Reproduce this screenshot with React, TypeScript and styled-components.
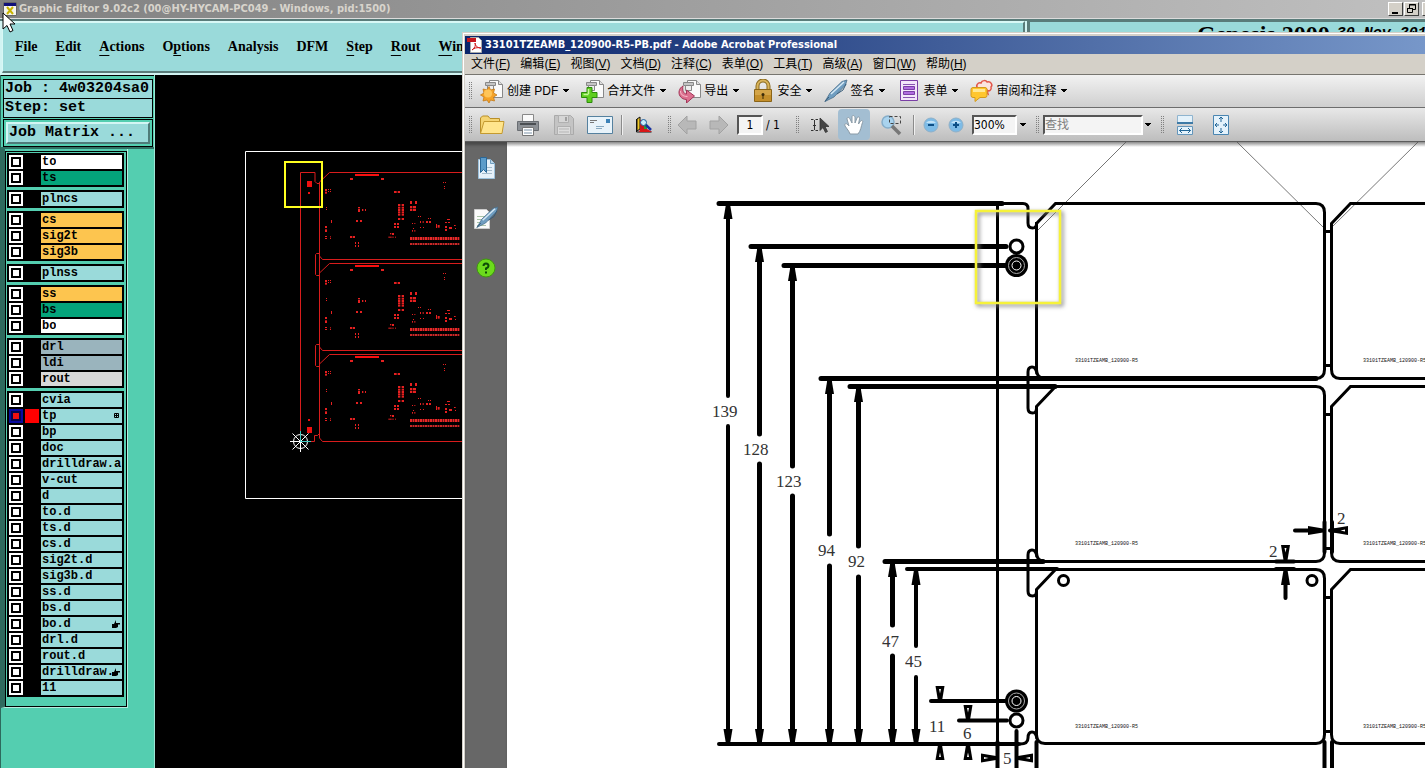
import React from "react";
import styled, { createGlobalStyle } from "styled-components";

const Global = createGlobalStyle`
  *, *::before { box-sizing: border-box; }
  html, body, #root { height: 100%; }
  body { margin: 0; overflow: hidden; background: #000; }
  button, input, select { font: inherit; color: inherit; margin: 0; padding: 0; border: 0; background: none; border-radius: 0; }
  svg { display: block; }
`;

const mono = `"Liberation Mono", monospace`;
const serif = `"Liberation Serif", serif`;
const ui = `"DejaVu Sans Condensed", "Noto Sans CJK SC", sans-serif`;
const cjk = `"Liberation Sans", "Noto Sans CJK SC", sans-serif`;

/* ---------- Graphic Editor window ---------- */

const Desktop = styled.div`
  position: relative;
  display: flex;
  flex-direction: column;
  height: 100vh;
  min-height: 400px;
  overflow: hidden;
`;

const EditorTitle = styled.header`
  display: flex;
  align-items: center;
  flex: none;
  height: 19px;
  padding: 0 0 0 3px;
  gap: 2px;
  border-bottom: 1px solid #dcdcdc;
  background: linear-gradient(90deg, #808080, #c0c0c0);
  color: #d8d4cc;
  font: bold 11px/18px ${ui};
  overflow: hidden;
`;

const TitleText = styled.span`
  flex: 1;
  white-space: nowrap;
`;

const WinButtons = styled.div`
  display: flex;
  gap: 1px;
  margin-right: -12px;
`;

const WinButton = styled.button<{ $apart?: boolean }>`
  width: 15px;
  height: 14px;
  margin-left: ${(p) => (p.$apart ? 2 : 0)}px;
  flex: none;
  background: #d4d0c8;
  border: 1px solid;
  border-color: #fff #404040 #404040 #fff;
`;

const MenuBar = styled.div`
  display: flex;
  flex: none;
  height: 56px;
  gap: 2px;
  padding-left: 2px;
  background: #d2f4f3;
  border-top: 2px solid #5a7c7a;
  border-bottom: 2px solid #d2f4f3;
`;

const MenuPanel = styled.nav`
  display: flex;
  flex: 1;
  gap: 18px;
  padding: 14px 0 0 12px;
  background: #9adada;
  border: solid;
  border-width: 2px 2px 2px 1px;
  border-color: #d8f8f6 #5a7c7a #5a7c7a #d8f8f6;
  font: bold 14px/20px ${serif};
  overflow: hidden;
`;

const MenuItem = styled.button`
  white-space: nowrap;
  height: 20px;
  u { text-underline-offset: 4px; }
`;

const BrandPanel = styled.div`
  display: flex;
  flex: 0 0 398px;
  gap: 7px;
  padding-left: 167px;
  background: #9adada;
  border: solid #5a7c7a;
  border-width: 1px 0 0 3px;
  white-space: nowrap;
  overflow: hidden;
`;

const Brand = styled.span`
  font: bold 24px/24px ${serif};
`;

const BrandDate = styled.span`
  font: italic bold 15px/24px ${mono};
`;

const Body = styled.div`
  display: flex;
  flex: 1;
  min-height: 0;
`;

const Sidebar = styled.aside`
  display: flex;
  flex-direction: column;
  flex: 0 0 155px;
  background: #54ceb0;
  border-left: 1px solid #2d6a5d;
  border-right: 1px solid #9ae6d4;
`;

const JobArea = styled.div`
  display: flex;
  flex-direction: column;
  padding: 3px 1px 0 2px;
  border-top: 1px solid #000;
  border-bottom: 2px solid #2f7263;
  font: bold 15px/18px ${mono};
`;

const JobLine = styled.div`
  height: 20px;
  padding-left: 1px;
  margin-bottom: -1px;
  border: 1px solid #000;
  background: #9adada;
  white-space: nowrap;
  overflow: hidden;
`;

const MatrixFrame = styled.div`
  margin-top: 2px;
  height: 28px;
  padding: 2px;
  border: 1px solid #000;
`;

const MatrixButton = styled.button`
  width: 100%;
  height: 22px;
  padding: 0 0 0 1px;
  text-align: left;
  line-height: 18px;
  background: #9adada;
  border: 2px solid;
  border-color: #d4f6f4 #4f7b79 #4f7b79 #d4f6f4;
`;

const LayerWell = styled.div`
  width: 127px;
  padding-top: 2px;
  border: solid;
  border-width: 0 1px 1px 4px;
  border-color: #2f6a5e #b6eddf #b6eddf #2f6a5e;
`;

const LayerBox = styled.div`
  display: flex;
  flex-direction: column;
  gap: 3px;
  padding: 1px 2px 9px 1px;
  border: 1px solid #000;
`;

const LayerGroup = styled.div`
  padding: 0 2px 2px;
  background: #000;
`;

const LayerRow = styled.div`
  display: grid;
  grid-template-columns: 14px 18px 1fr;
  padding-top: 2px;
  height: 16px;
`;

const LayerCheck = styled.input`
  appearance: none;
  width: 14px;
  height: 14px;
  padding: 2px;
  background: #fff;
  &::before {
    content: "";
    display: block;
    width: 10px;
    height: 10px;
    border: 2px solid #000;
  }
  &:checked { background: #0a0aa0; }
  &:checked::before { background: #f01010; border-color: #05054c; }
`;

const Swatch = styled.span<{ $on?: boolean }>`
  margin: 0 2px;
  background: ${(p) => (p.$on ? "#ff0000" : "#000")};
`;

const LayerName = styled.label<{ $fill: string }>`
  display: flex;
  align-items: center;
  justify-content: space-between;
  padding-left: 1px;
  background: ${(p) => p.$fill};
  font: bold 12px/14px ${mono};
  white-space: nowrap;
  overflow: hidden;
  span { overflow: hidden; height: 14px; }
  svg { flex: none; margin-right: 2px; }
`;

const EditorCanvas = styled.div`
  flex: 1;
  background: #000;
  overflow: hidden;
`;

const Drawing = styled.svg`
  width: 100%;
  height: 100%;
`;

const Pointer = styled.svg`
  position: absolute;
  left: 2px;
  top: 12px;
`;

/* ---------- Acrobat window ---------- */

const Acrobat = styled.section`
  position: absolute;
  left: 462px;
  right: 0;
  top: 32px;
  bottom: 0;
  display: flex;
  flex-direction: column;
  padding: 3px 0 0 2px;
  border: solid #d4d0c8;
  border-width: 1px 0 0 1px;
  background: #d4d0c8;
  box-shadow: inset 1px 1px 0 #fff;
  font: 12px/16px ${cjk};
`;

const AcroTitle = styled.header`
  display: flex;
  align-items: center;
  flex: none;
  height: 18px;
  gap: 2px;
  padding-left: 2px;
  color: #fff;
  background: linear-gradient(90deg, #0a246a, #7797c9);
  font: bold 11px/18px ${ui};
  white-space: nowrap;
  overflow: hidden;
`;

const AcroMenu = styled.nav`
  display: flex;
  flex: none;
  align-items: center;
  height: 21px;
  gap: 10px;
  padding-left: 6px;
  border-bottom: 1px solid #77756f;
`;

const AcroMenuItem = styled.button`
  white-space: nowrap;
  line-height: 18px;
`;

const TaskBar = styled.div`
  display: flex;
  flex: none;
  align-items: center;
  height: 33px;
  gap: 12px;
  padding-left: 3px;
  border-bottom: 1px solid #6d6d6d;
  background: linear-gradient(#f2f2f2, #cfcfcf);
`;

const TaskButton = styled.button`
  display: flex;
  align-items: center;
  height: 28px;
  white-space: nowrap;
  span { margin: 0 5px 0 2px; }
  &:first-of-type { margin-left: -4px; }
  &:first-of-type span { margin-left: 3px; }
`;

const ToolBar = styled.div`
  display: flex;
  flex: none;
  align-items: center;
  height: 34px;
  padding-left: 3px;
  border-bottom: 1px solid #5d5d5d;
  background: linear-gradient(#e8e8e8, #bdbdbd);
  font-family: ${ui};
`;

const Tool = styled.button<{ $w?: number; $active?: boolean }>`
  display: flex;
  align-items: center;
  justify-content: center;
  flex: none;
  width: ${(p) => p.$w ?? 36}px;
  height: 31px;
  border-radius: 4px;
  background: ${(p) => (p.$active ? "#a3bed2" : "none")};
`;

const Grip = styled.span`
  flex: none;
  width: 4px;
  height: 18px;
  background: conic-gradient(#808080 25%, transparent 0) 0 0 / 2px 2px;
`;

const Divider = styled.span`
  flex: none;
  width: 2px;
  height: 20px;
  margin: 0 3px;
  background: #8b8b8b;
  border-right: 1px solid #f0f0f0;
`;

const Gap = styled.span<{ $w: number }>`
  flex: none;
  width: ${(p) => p.$w}px;
`;

const sunken = `
  height: 20px;
  background: #f4f4f4;
  border: 2px solid;
  border-color: #555 #fff #fff #555;
`;

const PageInput = styled.input`
  ${sunken}
  width: 26px;
  text-align: center;
`;

const ZoomSelect = styled.select`
  ${sunken}
  appearance: none;
  width: 45px;
  line-height: 16px;
`;

const FindInput = styled.input`
  ${sunken}
  width: 100px;
  font-family: ${cjk};
  &::placeholder { color: #808080; opacity: 1; }
`;

const PageTotal = styled.span`
  width: 29px;
  padding-left: 3px;
  white-space: nowrap;
`;

const Workspace = styled.div`
  display: flex;
  flex: 1;
  min-height: 0;
`;

const NavPane = styled.nav`
  display: flex;
  flex-direction: column;
  flex: 0 0 42px;
  gap: 24px;
  padding-top: 13px;
  background: #676767;
  box-shadow: inset 0 4px 3px -1px #484848;
`;

const NavButton = styled.button`
  display: flex;
  justify-content: center;
  align-items: center;
  width: 42px;
  height: 26px;
`;

const Page = styled.main`
  flex: 1;
  min-width: 0;
  background: linear-gradient(#8a8a8a, #fff 5px);
`;

/* ---------- icons ---------- */

const Arrow = () => (
  <svg width="6" height="4" viewBox="0 0 6 4" shapeRendering="crispEdges"><path d="M0 0h6L3 4z" /></svg>
);

const Svg = ({ w = 24, h = 24, children }: { w?: number; h?: number; children: React.ReactNode }) => (
  <svg width={w} height={h} viewBox={`0 0 ${w} ${h}`} style={{ flex: "none" }}>{children}</svg>
);

const Sheets = () => (
  <g stroke="#888" strokeWidth="1">
    <path d="M9.500 1.500h9l4 4v13h-13z" fill="#fafafa" />
    <path d="M18.500 1.500v4h4" fill="#ddd" />
    <path d="M5.500 3.500h10v3h-10z" fill="#c4c4c4" />
    <path d="M7.500 6.500h6v5h-6z" fill="#eee" />
  </g>
);

const CreateIcon = () => (
  <Svg>
    <Sheets />
    <path d="M9 7.500l1.500 3.500 4-1-1 4 3.500 2-3.500 2 1 4-4-1L9 24l-2-3-4 1 1-4-3.500-2L4 14l-1-4 4 1z" fill="#f5a227" stroke="#c47a18" strokeWidth=".8" />
    <circle cx="8" cy="14.500" r="4" fill="#ffc558" />
  </Svg>
);
const MergeIcon = () => (
  <Svg>
    <Sheets />
    <path d="M6 8.500h5v5h5v5h-5v5H6v-5H.500v-5H6z" fill="#5fce1f" stroke="#2c8a0c" />
    <path d="M7.500 10v5M2.500 15.500h5" stroke="#c4f79a" strokeWidth="1.500" />
  </Svg>
);
const ExportIcon = () => (
  <Svg>
    <Sheets />
    <path d="M5 7C1 9 0 14 2 17c1.500 2.500 4 3.500 6.500 3.500V24l8-7-8-6v4c-3 0-4.500-4-3.500-8z" fill="#dd6f8e" stroke="#a33558" />
    <path d="M2.500 12c0 3 2 5.500 7 5.500" stroke="#f6bccb" fill="none" />
  </Svg>
);
const LockIcon = () => (
  <Svg>
    <path d="M6.500 12V7a5.500 5.500 0 0 1 11 0v5" fill="none" stroke="#8a6a20" strokeWidth="4" />
    <path d="M6.500 12V7a5.500 5.500 0 0 1 11 0v5" fill="none" stroke="#d9b45b" strokeWidth="2" />
    <path d="M3.500 10.500h17v12h-17z" fill="#c48f2b" stroke="#8a6418" />
    <path d="M4 11h16v5H4z" fill="#d4a548" />
    <circle cx="12" cy="15.500" r="1.500" fill="#3a2a08" /><path d="M11.500 16h1v4h-1z" fill="#3a2a08" />
  </Svg>
);
const PenShape = () => (
  <g>
    <path d="M1 22.500L6 14 18 2.500 23 1l-1.500 5L10 18z" fill="#6f9dc0" stroke="#4a6f8c" strokeWidth=".8" />
    <path d="M7 15L20 3" stroke="#d6e9f5" strokeWidth="1.500" />
    <path d="M1 22.500l4-4.500M13 15l6-4 3-6" stroke="#355b78" fill="none" />
  </g>
);
const PenIcon = () => <Svg><PenShape /></Svg>;
const FormIcon = () => (
  <Svg>
    <path d="M3.500 1.500h17v20h-17z" fill="#f3e6fa" stroke="#7a3fa5" />
    <path d="M6 5.500h12M6 18.500h12" stroke="#8a55b3" strokeWidth="1" />
    <path d="M6.500 7.500h11v3h-11zM6.500 12.500h11v3h-11z" fill="#b06be0" stroke="#7a3fa5" />
  </Svg>
);
const ReviewIcon = () => (
  <Svg>
    <path d="M8 9c-3-2 0-6 3-5 1-3 5-3 6-1 4-1 6 3 4 5 1 3-2 5-4 3l1 4-4-3" fill="#fbe4e0" stroke="#e2564a" strokeWidth="1.500" />
    <path d="M3 8.500h12q2 0 2 2v6q0 2-2 2h-5l-5 4v-4H3q-2 0-2-2v-6q0-2 2-2z" fill="#ffc62e" stroke="#d39a1c" />
    <path d="M3 11.500h12" stroke="#ffe894" strokeWidth="3" />
  </Svg>
);
const FolderIcon = () => (
  <Svg w={26} h={22}>
    <path d="M1.500 19.500V4l2-2H9l2 2.500h9.500v4" fill="#f4d473" stroke="#b98f28" />
    <path d="M1.500 19.500L5 7.500h20l-2 12z" fill="#ffe58d" stroke="#c49a30" />
  </Svg>
);
const PrinterIcon = () => (
  <Svg w={24}>
    <path d="M6.500 1.500h11v7h-11z" fill="#fafafa" stroke="#888" />
    <path d="M1.500 8.500h21v9h-21z" fill="#8d9196" stroke="#6a6e73" />
    <path d="M4 11h16" stroke="#4b4f53" strokeWidth="2" />
    <path d="M6.500 14.500h11v8h-11z" fill="#fff" stroke="#777" />
    <path d="M8 17h8M8 20h8" stroke="#7d93a8" />
  </Svg>
);
const DiskIcon = () => (
  <Svg w={22} h={22}>
    <path d="M1.500 1.500h16l3 3v16h-19z" fill="#c4c4c4" stroke="#aaa" />
    <path d="M5.500 1.500h10v7h-10z" fill="#d6d6d6" stroke="#b0b0b0" /><path d="M12 3h2v4h-2z" fill="#a0a0a0" />
    <path d="M4.500 12.500h13v8h-13z" fill="#dcdcdc" stroke="#b0b0b0" /><path d="M6 15h10M6 18h10" stroke="#b5b5b5" />
  </Svg>
);
const MailIcon = () => (
  <Svg w={26} h={20}>
    <path d="M.500 1.500h25v17H.500z" fill="#e8f3fa" stroke="#55819f" />
    <path d="M19 4h4v4h-4z" fill="#3c82b8" />
    <path d="M3 5.500h7M3 7.500h4" stroke="#777" /><path d="M9 11.500h8M9 13.500h6" stroke="#87a9c0" />
  </Svg>
);
const OrganizerIcon = () => (
  <Svg w={18} h={18}>
    <path d="M2 3l3-2v12l-3 2z" fill="#f2c928" stroke="#111" /><path d="M5 4h4v9H5z" fill="#c81818" />
    <path d="M9 8h3v5H9z" fill="#2a9a38" />
    <path d="M1.500 3v13h15" stroke="#111" fill="none" />
    <circle cx="8.500" cy="6.500" r="3" fill="#c8ecfa" stroke="#1d5c9a" /><path d="M11 9l5 5" stroke="#1832a0" strokeWidth="2.500" />
    <path d="M5 13h7l5 3H4z" fill="#d81818" />
  </Svg>
);
const NavArrow = ({ flip }: { flip?: boolean }) => (
  <Svg w={20} h={20}>
    <path d={flip ? "M19 10L10 1v5H1v8h9v5z" : "M1 10l9-9v5h9v8h-9v5z"} fill="#b8b8b8" stroke="#a2a2a2" />
  </Svg>
);
const SelectIcon = () => (
  <Svg w={20} h={18}>
    <path d="M1 3.500h2.500M5.500 3.500H8M4.500 4v10M1 14.500h2.500M5.500 14.500H8M3 9.500h3" stroke="#333" strokeWidth="1" fill="none" />
    <path d="M10 2l9 8.500h-4l2.500 5-2 1-2.500-5-3 3z" fill="#444" stroke="#333" strokeWidth=".8" />
  </Svg>
);
const HandIcon = () => (
  <Svg w={22} h={22}>
    <path d="M7 20c-1-3-3-5-5-8-1-2 1-3 2-2l2 2L4 5c0-2 2-2 3 0l2 4V3c0-2 2-2 3 0v6l2-5c1-2 3-1 2.500 1L15.500 10l2-3c1-1 3-.5 2 1.500-1.500 4-1.500 8-4.500 11.500z" fill="#fff" stroke="#8a9aa6" />
  </Svg>
);
const ZoomIcon = () => (
  <Svg w={24} h={22}>
    <circle cx="8" cy="8" r="6" fill="#a9d3ee" stroke="#86aeca" strokeWidth="1.500" />
    <path d="M9.500 2.500h11v7h-11z" fill="none" stroke="#444" strokeDasharray="3 2" />
    <path d="M12 12l8 8" stroke="#777" strokeWidth="3.500" />
  </Svg>
);
const Round = ({ plus }: { plus?: boolean }) => (
  <Svg w={16} h={16}>
    <circle cx="8" cy="8" r="7" fill="#7dbbe6" stroke="#8fb0c8" />
    <path d="M3 6a5.500 4 0 0 1 10 0z" fill="#c1e2f7" />
    <path d={plus ? "M5 8h6M8 5v6" : "M5 8h6"} stroke="#0d4f86" strokeWidth="2" />
  </Svg>
);
const FitWidthIcon = () => (
  <Svg w={16} h={20}>
    <path d="M.500.500h15v8H.500z" fill="#e4f2fb" stroke="#8fb4cf" /><path d="M0 7h16v2H0z" fill="#3e7aa6" />
    <path d="M.500 11.500h15v8H.500z" fill="#e4f2fb" stroke="#6496bb" />
    <path d="M2.500 15.500h11M5 13l-2.500 2.500L5 18M11 13l2.500 2.500L11 18" fill="none" stroke="#206596" />
  </Svg>
);
const FitPageIcon = () => (
  <Svg w={16} h={20}>
    <path d="M.500.500h15v19H.500z" fill="#e4f2fb" stroke="#4a86b2" />
    <path d="M8 2v5M6 4l2-2 2 2M8 18v-5M6 16l2 2 2-2M2 10h4M4 8l-2 2 2 2M14 10h-4M12 8l2 2-2 2" fill="none" stroke="#206596" />
  </Svg>
);
const BookmarkIcon = () => (
  <Svg w={20}>
    <path d="M2.500 3.500h12l4 4v15h-16z" fill="#e6f1fa" stroke="#9cc1dc" /><path d="M14.500 3.500v4h4" fill="#bcd8eb" stroke="#6f9dbe" />
    <path d="M10 11.500h6M10 14.500h6M6 17.500h10" stroke="#a5bccd" />
    <path d="M4.500 1.500h6v15l-3-3-3 3z" fill="#5b9bc9" stroke="#2a6797" />
  </Svg>
);
const SignNavIcon = () => (
  <Svg w={26} h={26}>
    <path d="M1.500 4.500h12l3 3v16h-15z" fill="#fafafa" stroke="#ccc" /><path d="M4 11.500h8M4 14.500h6M4 17.500h9M4 20.500h9" stroke="#a9c4a8" />
    <g transform="translate(3 1) scale(.95)"><PenShape /></g>
  </Svg>
);
const PdfIcon = () => (
  <Svg w={16} h={16}>
    <path d="M3.500.500h8l3 3v12h-11z" fill="#fff" stroke="#aaa" /><path d="M0 1h9v4H0z" fill="#c4161c" />
    <path d="M5 13c3-2 4-5 3-7 0 3 3 5 6 5-4-1-7 0-9 2z" fill="none" stroke="#d01818" />
  </Svg>
);
const XIcon = () => (
  <Svg w={14} h={14}>
    <path d="M.500.500h13v13H.500z" fill="#f4f4ec" stroke="#666" /><path d="M1 1h12v3H1z" fill="#10107a" />
    <path d="M4 5l6 7M10 5l-6 7" stroke="#c9b400" strokeWidth="2" />
  </Svg>
);

/* ---------- data ---------- */

const aqua = "#9adada";
const amber = "#fdc54f";
const green = "#04a47b";
const slate = "#9ab4bd";

type Layer = { name: string; fill: string; on?: boolean; mark?: "grid" | "hand" };
const L = (name: string, fill = aqua, extra: Partial<Layer> = {}): Layer => ({ name, fill, ...extra });

const groups: Layer[][] = [
  [L("to", "#fff"), L("ts", green)],
  [L("plncs")],
  [L("cs", amber), L("sig2t", amber), L("sig3b", amber)],
  [L("plnss")],
  [L("ss", amber), L("bs", green), L("bo", "#fff")],
  [L("drl", slate), L("ldi", slate), L("rout", "#d8d8d8")],
  [
    L("cvia"), L("tp", aqua, { on: true, mark: "grid" }), L("bp"), L("doc"), L("drilldraw.ar"), L("v-cut"), L("d"),
    L("to.d"), L("ts.d"), L("cs.d"), L("sig2t.d"), L("sig3b.d"), L("ss.d"), L("bs.d"),
    L("bo.d", aqua, { mark: "hand" }), L("drl.d"), L("rout.d"), L("drilldraw.", aqua, { mark: "hand" }), L("11"),
  ],
];

const editorMenu: [string, string, string][] = [
  ["", "F", "ile"], ["", "E", "dit"], ["", "A", "ctions"], ["O", "p", "tions"], ["Analysis", "", ""],
  ["DFM", "", ""], ["", "S", "tep"], ["", "R", "out"], ["", "W", "indows"],
];

const acroMenu: [string, string][] = [
  ["文件", "F"], ["编辑", "E"], ["视图", "V"], ["文档", "D"], ["注释", "C"],
  ["表单", "O"], ["工具", "T"], ["高级", "A"], ["窗口", "W"], ["帮助", "H"],
];

const tasks: [string, () => React.JSX.Element][] = [
  ["创建 PDF", CreateIcon], ["合并文件", MergeIcon], ["导出", ExportIcon], ["安全", LockIcon],
  ["签名", PenIcon], ["表单", FormIcon], ["审阅和注释", ReviewIcon],
];

/* Component pads of one circuit board, in thirds of a pixel: x, y, width, height. */
const pads: number[][] = [
  [345, 114, 9, 6], [438, 114, 9, 6],
  [270, 147, 6, 6], [270, 155, 6, 6], [279, 147, 3, 3], [285, 147, 3, 3], [279, 153, 3, 3], [285, 153, 3, 3],
  [273, 201, 3, 3], [273, 207, 3, 3], [288, 240, 3, 9], [270, 258, 6, 6], [270, 268, 6, 8], [270, 288, 6, 3], [270, 294, 6, 3],
  [285, 289, 3, 3], [285, 294, 3, 3], [369, 201, 6, 4], [369, 207, 6, 9], [381, 207, 4, 6], [390, 207, 3, 6],
  [363, 240, 6, 6], [375, 240, 6, 6], [345, 288, 7, 6], [354, 288, 6, 6], [360, 306, 3, 6], [369, 306, 3, 6], [360, 315, 3, 6], [369, 315, 3, 6],
  [477, 153, 8, 6], [488, 153, 7, 6],
  ...[192, 200, 207, 214, 221, 234].flatMap((y) => [[489, y, 7, 6], [500, y, 7, 6]]),
  [525, 183, 6, 9], [540, 183, 6, 9], [525, 198, 6, 6], [533, 198, 10, 6], [525, 206, 6, 7], [533, 206, 10, 7],
  [477, 249, 6, 6], [486, 249, 6, 6], [477, 258, 6, 6], [486, 258, 6, 6],
  [465, 279, 4, 4], [471, 279, 6, 6], [460, 290, 10, 3], [472, 290, 4, 3], [480, 290, 3, 3],
  [624, 126, 3, 3], [630, 126, 3, 3], [627, 138, 3, 3], [627, 144, 3, 3],
  [549, 228, 3, 3], [555, 228, 3, 3], [555, 243, 3, 6], [563, 243, 3, 6], [579, 234, 3, 3], [585, 234, 3, 3], [573, 243, 6, 6], [582, 243, 6, 6],
  [531, 249, 3, 3], [538, 249, 3, 3], [534, 264, 3, 3], [531, 270, 3, 5], [538, 270, 3, 5], [555, 261, 3, 3], [564, 261, 3, 3],
  [603, 252, 3, 12], [608, 255, 6, 8], [636, 237, 9, 3], [630, 246, 6, 3], [639, 246, 6, 3],
  [630, 258, 6, 6], [630, 267, 6, 6], [642, 261, 9, 6], [657, 255, 5, 3], [660, 264, 3, 3],
];

const dims = [
  { x: 728, top: 204, a: 396, b: 426, label: "139", tx: 712, ty: 417 },
  { x: 759.5, top: 247, a: 434, b: 464, label: "128", tx: 743, ty: 455 },
  { x: 792.5, top: 266, a: 466, b: 496, label: "123", tx: 776, ty: 487 },
  { x: 829.5, top: 379, a: 534, b: 566, label: "94", tx: 818, ty: 556 },
  { x: 858.5, top: 387, a: 546, b: 577, label: "92", tx: 848, ty: 567 },
  { x: 892.5, top: 562, a: 625, b: 656, label: "47", tx: 882, ty: 647 },
  { x: 916, top: 570, a: 646, b: 677, label: "45", tx: 905, ty: 667 },
];

const notes: [string, number, number][] = [
  ["11", 929, 732], ["6", 963, 739], ["5", 1003, 764], ["2", 1337, 524], ["2", 1269, 557],
];

/* ---------- drawings ---------- */

const PanelView = () => (
  <Drawing role="img" aria-label="Panel layout">
    <g transform="translate(-155 -75)">
      <path d="M1500 151.500H245.500v347H1500" fill="none" stroke="#fff" />
      <g fill="none" stroke="#d81c1c">
        <path d="M300.500 441V172.500h14.500v9l2 2h2.500M300.500 441.500h14v-6h3l2-2M319.500 182v256" />
        {[0, 91, 182].map((dy) => (
          <path key={dy} d={`M319.500 ${182 + dy}l10-9.500H1500M319.500 ${256 + dy}l3 3.500H1500`} />
        ))}
        {[0, 91].map((dy) => (
          <path key={dy} d={`M319.500 ${253.5 + dy}h-3l-1 1v20l1 1h3`} />
        ))}
      </g>
      {[0, 91, 182].map((dy) => (
        <g key={dy} transform={`translate(235 ${140 + dy}) scale(.33333)`} fill="#e62020">
          {pads.map(([x, y, w, h], i) => (
            <rect key={i} x={x} y={y} width={w} height={h} />
          ))}
          <rect x="360" y="102" width="72" height="6" fill="#f81010" />
          <path d="M525 295.500h148" stroke="#e82828" strokeWidth="9" strokeDasharray="6 1.500" />
          <path d="M525 312h148" stroke="#c82828" strokeWidth="6" strokeDasharray="6 1.500" />
        </g>
      ))}
      <path d="M307 181h5v6h-5zM308 192h2v2h-2zM307 427h5v6h-5zM308 419h2v2h-2z" fill="#f01010" />
      <rect x="285" y="162" width="37" height="45" fill="none" stroke="#ffff20" strokeWidth="2" />
      <g stroke="#fff" fill="none">
        <circle cx="300.500" cy="441.500" r="7" />
        <path d="M290 441.500h21M300.500 431v21M292.500 433.500l16 16M308.500 433.500l-16 16" />
        <path d="M300.500 431v10.500H311" stroke="#40c8c0" />
      </g>
    </g>
  </Drawing>
);

const Target = ({ y }: { y: number }) => (
  <g>
    <circle cx="1016.500" cy={y} r="11.500" />
    <circle cx="1016.500" cy={y} r="8" fill="none" stroke="#aaa" strokeWidth="1" />
    <circle cx="1016.500" cy={y} r="4.500" fill="none" stroke="#fff" strokeWidth="1" />
  </g>
);

/* Arrow head whose tip sits at (x, y), turned by the given angle; 0 points up. */
const Head = ({ x, y, turn = 0, hollow }: { x: number; y: number; turn?: number; hollow?: boolean }) => (
  <g transform={`translate(${x} ${y}) rotate(${turn})`}>
    <path d="M-2 0h4l2.500 15h-9z" />
    {hollow && <path d="M0 7.500l1 4.500h-2z" fill="#fff" />}
  </g>
);

const PdfDrawing = () => (
  <Drawing role="img" aria-label="33101TZEAMB panel dimensions">
    <g transform="translate(-507 -142)">
      <g stroke="#555" strokeWidth="1" opacity=".8">
        <path d="M1126 142l-89 89M1237 142l87 86M1418 142l-86 85" />
      </g>
      <g fill="none" stroke="#000" strokeWidth="3">
        {[0, 295].map((dx) =>
          [[203.5, 378.5], [386.5, 561.5], [569.5, 743.5]].map(([t, b]) => (
            <path
              key={`${dx}-${t}`}
              d={`M${1036.5 + dx} ${t + 20}L${1055.5 + dx} ${t}H${1316 + dx}q8.500 0 8.500 9V${b - 9}q0 9-8.500 9H${1045 + dx}q-8.500 0-8.500-9z`}
            />
          ))
        )}
        <path d="M997.500 203v565M1003 203.500h20q5 0 5 5V223q0 5 4.500 5t4-6" />
        {[0, 183].map((dy) => (
          <path key={dy} d={`M1037 ${374 + dy}q-1-7-5-7t-4 5v36q0 5 4.500 5t4-6`} />
        ))}
        <path d="M1020 744q8 0 8-6 0-6 4-6t5 7" />
        <path d="M1326 231.500h5M1326 365.500h5M1326 414.500h5M1326 548.500h5M1326 597.500h5M1326 731.500h5" />
        <circle cx="1016.500" cy="246.500" r="6.500" />
        <circle cx="1016.500" cy="720.500" r="6.500" />
        <circle cx="1063.500" cy="580.500" r="5" />
        <circle cx="1312" cy="580.500" r="5" />
      </g>
      <g fill="none" stroke="#000" strokeWidth="4" strokeLinecap="round">
        <g strokeWidth="5">
          <path d="M719 203.500h283M751 246.500h255M784 265.500h222M821 378.500h495M850 386.500h205M885 561.500h158" />
        </g>
        <path d="M907 569h150M719 744h300M931 701h76M959 720.500h48" />
        <path d="M997.500 742v30M1016.500 731v41M1036.500 742v30M1324.500 742v30M1332 742v30M1324.500 522v30M1332 522v30" />
        <path d="M1295 530.500h20M1330 530.500h5M1276 561.500h18M1276 569h18M1285.500 580v18" />
        {dims.map((d) => (
          <path key={d.x} d={`M${d.x} ${d.top}V${d.a}M${d.x} ${d.b}V742`} strokeWidth={d.x % 1 ? 5 : 4} />
        ))}
      </g>
      {dims.map((d) => (
        <g key={d.x}>
          <Head x={d.x} y={d.top} />
          <Head x={d.x} y={744} turn={180} />
        </g>
      ))}
      {[[940, 701], [968, 720]].map(([x, y]) => (
        <g key={x}>
          <Head x={x} y={y} turn={180} hollow />
          <Head x={x} y={745} hollow />
        </g>
      ))}
      <Head x={996} y={758} turn={90} hollow />
      <Head x={1018} y={758} turn={-90} hollow />
      <Head x={1323} y={530.5} turn={90} />
      <Head x={1333} y={530.5} turn={-90} hollow />
      <Head x={1285.5} y={560} turn={180} hollow />
      <Head x={1285.5} y={570} />
      <Target y={265.5} />
      <Target y={701} />
      <g fontFamily="Liberation Serif, serif" fontSize="17" fill="#333">
        {dims.map((d) => <text key={d.label} x={d.tx} y={d.ty}>{d.label}</text>)}
        {notes.map(([t, x, y]) => <text key={x} x={x} y={y}>{t}</text>)}
      </g>
      <g fontFamily="Liberation Mono, monospace" fontSize="5" fill="#111">
        {[1075, 1363].map((x) => [362, 545, 728].map((y) => <text key={`${x}${y}`} x={x} y={y}>33101TZEAMB_120900-R5</text>))}
      </g>
      <rect x="976" y="211" width="84" height="92" fill="none" stroke="#f6f23a" strokeWidth="2.500" style={{ filter: "drop-shadow(2px 2px 2px #777)" }} />
    </g>
  </Drawing>
);

/* ---------- page ---------- */

const Marker = ({ kind }: { kind: "grid" | "hand" }) =>
  kind === "grid" ? (
    <svg width="6" height="6" viewBox="0 0 6 6" aria-hidden="true"><path d="M.500.500h4v4h-4zM2.500 0v5M0 2.500h5" fill="none" stroke="#000" /></svg>
  ) : (
    <svg width="8" height="8" viewBox="0 0 8 8" aria-hidden="true"><path d="M0 4h2l2-4v3h4v1.500H6V7L4 8H0z" /></svg>
  );

export default function App() {
  return (
    <Desktop>
      <Global />
      <EditorTitle>
        <XIcon />
        <TitleText>Graphic Editor 9.02c2 (00@HY-HYCAM-PC049 - Windows, pid:1500)</TitleText>
        <WinButtons>
          <WinButton aria-label="Minimize"><Svg w={12} h={12}><path d="M3 9h6v2H3z" /></Svg></WinButton>
          <WinButton aria-label="Restore"><Svg w={12} h={12}><path d="M4.500 5V1.500h6v5H8M4 2h7M2.500 5.500h5v4h-5zM2 5.500h6" fill="none" stroke="#000" /></Svg></WinButton>
          <WinButton $apart aria-label="Close" />
        </WinButtons>
      </EditorTitle>
      <MenuBar>
        <MenuPanel>
          {editorMenu.map(([a, key, b]) => (
            <MenuItem key={a + key + b}>{a}<u>{key}</u>{b}</MenuItem>
          ))}
        </MenuPanel>
        <BrandPanel>
          <Brand>Genesis 2000</Brand>
          <BrandDate>30 Nov 2011</BrandDate>
        </BrandPanel>
      </MenuBar>
      <Body>
        <Sidebar>
          <JobArea>
            <JobLine>Job : 4w03204sa0</JobLine>
            <JobLine>Step: set</JobLine>
            <MatrixFrame><MatrixButton>Job Matrix ...</MatrixButton></MatrixFrame>
          </JobArea>
          <LayerWell>
            <LayerBox>
              {groups.map((rows) => (
                <LayerGroup key={rows[0].name}>
                  {rows.map((l) => (
                    <LayerRow key={l.name}>
                      <LayerCheck type="checkbox" id={`layer-${l.name}`} defaultChecked={l.on} />
                      <Swatch $on={l.on} />
                      <LayerName htmlFor={`layer-${l.name}`} $fill={l.fill}>
                        <span>{l.name}</span>
                        {l.mark && <Marker kind={l.mark} />}
                      </LayerName>
                    </LayerRow>
                  ))}
                </LayerGroup>
              ))}
            </LayerBox>
          </LayerWell>
        </Sidebar>
        <EditorCanvas><PanelView /></EditorCanvas>
      </Body>

      <Acrobat>
        <AcroTitle><PdfIcon />33101TZEAMB_120900-R5-PB.pdf - Adobe Acrobat Professional</AcroTitle>
        <AcroMenu>
          {acroMenu.map(([t, k]) => (
            <AcroMenuItem key={t}>{t}(<u>{k}</u>)</AcroMenuItem>
          ))}
        </AcroMenu>
        <TaskBar>
          <Grip />
          {tasks.map(([t, Icon]) => (
            <TaskButton key={t}><Icon /><span>{t}</span><Arrow /></TaskButton>
          ))}
        </TaskBar>
        <ToolBar>
          <Grip />
          <Gap $w={2} />
          <Tool aria-label="Open"><FolderIcon /></Tool>
          <Tool aria-label="Print"><PrinterIcon /></Tool>
          <Tool aria-label="Save" disabled><DiskIcon /></Tool>
          <Tool aria-label="Email"><MailIcon /></Tool>
          <Divider />
          <Tool aria-label="Organizer"><OrganizerIcon /></Tool>
          <Gap $w={5} />
          <Grip />
          <Tool $w={32} aria-label="Previous page" disabled><NavArrow /></Tool>
          <Tool $w={32} aria-label="Next page" disabled><NavArrow flip /></Tool>
          <Gap $w={2} />
          <PageInput aria-label="Page" defaultValue="1" />
          <PageTotal>/ 1</PageTotal>
          <Gap $w={3} />
          <Grip />
          <Gap $w={3} />
          <Tool aria-label="Select"><SelectIcon /></Tool>
          <Tool $w={32} $active aria-label="Hand"><HandIcon /></Tool>
          <Gap $w={4} />
          <Tool aria-label="Marquee zoom"><ZoomIcon /></Tool>
          <Divider />
          <Tool $w={25} aria-label="Zoom out"><Round /></Tool>
          <Tool $w={25} aria-label="Zoom in"><Round plus /></Tool>
          <Gap $w={4} />
          <ZoomSelect aria-label="Zoom level"><option>300%</option></ZoomSelect>
          <Tool $w={11} aria-label="Zoom levels"><Arrow /></Tool>
          <Gap $w={7} />
          <Grip />
          <Gap $w={4} />
          <FindInput aria-label="查找" placeholder="查找" />
          <Tool $w={10} aria-label="Find options"><Arrow /></Tool>
          <Gap $w={7} />
          <Grip />
          <Gap $w={3} />
          <Tool aria-label="Fit width"><FitWidthIcon /></Tool>
          <Tool aria-label="Fit page"><FitPageIcon /></Tool>
        </ToolBar>
        <Workspace>
          <NavPane>
            <NavButton aria-label="Bookmarks"><BookmarkIcon /></NavButton>
            <NavButton aria-label="Signatures"><SignNavIcon /></NavButton>
            <NavButton aria-label="Help">
              <Svg w={20} h={20}>
                <circle cx="10" cy="10" r="9" fill="#6cdb1c" stroke="#3e9a0c" />
                <path d="M7.500 8q0-2.500 2.500-2.500T12.500 8q0 1.500-2.500 2.500v1.500M10 13.500v2" fill="none" stroke="#0d4d06" strokeWidth="2" />
              </Svg>
            </NavButton>
          </NavPane>
          <Page><PdfDrawing /></Page>
        </Workspace>
      </Acrobat>

      <Pointer width="14" height="22" viewBox="0 0 14 22" aria-hidden="true">
        <path d="M1 1v16l4-3.500L8 20l3-1.500L8 12h5z" fill="#fff" stroke="#000" />
      </Pointer>
    </Desktop>
  );
}
